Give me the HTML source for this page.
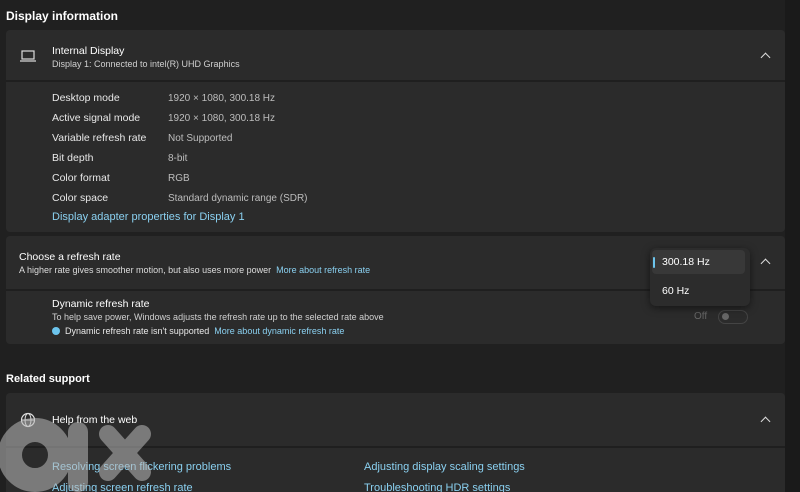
<!DOCTYPE html><html><head><style>
html,body{margin:0;width:800px;height:492px;overflow:hidden}
body{background:#202020;font-family:"Liberation Sans",sans-serif;color:#fff;position:relative}
.a{position:absolute;white-space:nowrap}
.card{position:absolute;left:6px;width:779px;background:#2b2b2b;border-radius:4px}
.sep{position:absolute;left:6px;width:779px;height:2px;background:#1f1f1f}
.h{font-size:12px;font-weight:bold}
.t{font-size:10.5px}
.s{font-size:9px;color:#d0d0d0}
.l{color:#8ad0f0}
.k{font-size:10.5px;color:#e8e8e8}
.v{font-size:10.5px;color:#bdbdbd}
.chev{position:absolute;width:6px;height:6px;border-left:1.5px solid #ddd;border-top:1.5px solid #ddd;transform:rotate(45deg)}
</style></head><body>
<div class="a" style="left:785px;top:0;width:15px;height:492px;background:#1a1a1a"></div>
<div class="a h" style="left:6px;top:9px">Display information</div>
<div class="card" style="top:30px;height:202px"></div>
<div class="sep" style="top:80px"></div>
<svg class="a" style="left:20px;top:50px" width="16" height="13"><rect x="2" y="1" width="12" height="8" fill="none" stroke="#ddd" stroke-width="1.2"/><line x1="0" y1="11" x2="16" y2="11" stroke="#ddd" stroke-width="1.2"/></svg>
<div class="a t" style="left:52px;top:45px">Internal Display</div>
<div class="a s" style="left:52px;top:59px">Display 1: Connected to intel(R) UHD Graphics</div>
<div class="chev" style="left:762px;top:54px"></div>
<div class="a k" style="left:52px;top:88px;line-height:20px">Desktop mode<br>Active signal mode<br>Variable refresh rate<br>Bit depth<br>Color format<br>Color space</div>
<div class="a v" style="left:168px;top:88px;line-height:20px;font-size:10px;padding-top:1px">1920 × 1080, 300.18 Hz<br>1920 × 1080, 300.18 Hz<br>Not Supported<br>8-bit<br>RGB<br>Standard dynamic range (SDR)</div>
<div class="a l" style="left:52px;top:211px;font-size:11px">Display adapter properties for Display 1</div>
<div class="card" style="top:236px;height:108px"></div>
<div class="sep" style="top:289px"></div>
<div class="a t" style="left:19px;top:251px">Choose a refresh rate</div>
<div class="a s" style="left:19px;top:265px;color:#ddd">A higher rate gives smoother motion, but also uses more power &nbsp;<span class="l">More about refresh rate</span></div>
<div class="a t" style="left:52px;top:298px">Dynamic refresh rate</div>
<div class="a s" style="left:52px;top:312px">To help save power, Windows adjusts the refresh rate up to the selected rate above</div>
<div class="a" style="left:52px;top:327px;width:8px;height:8px;border-radius:50%;background:#6cc4ec"></div>
<div class="a s" style="left:65px;top:326px;color:#e8e8e8">Dynamic refresh rate isn't supported &nbsp;<span class="l">More about dynamic refresh rate</span></div>
<div class="a v" style="left:694px;top:311px;color:#666;font-size:10px">Off</div>
<div class="a" style="left:718px;top:310px;width:28px;height:12px;border:1px solid #444;border-radius:7px"></div>
<div class="a" style="left:722px;top:313px;width:7px;height:7px;border-radius:50%;background:#666"></div>
<div class="a" style="left:650px;top:248px;width:100px;height:58px;background:#2c2c2c;border-radius:6px;box-shadow:0 2px 8px rgba(0,0,0,.5)"></div>
<div class="a" style="left:652px;top:250px;width:93px;height:24px;background:#383838;border-radius:4px"></div>
<div class="a" style="left:653px;top:257px;width:2px;height:11px;background:#6cc4ec;border-radius:1px"></div>
<div class="a t" style="left:662px;top:256px">300.18 Hz</div>
<div class="a t" style="left:662px;top:285px">60 Hz</div>
<div class="chev" style="left:762px;top:260px"></div>
<div class="a h" style="left:6px;top:373px;font-size:11px">Related support</div>
<div class="card" style="top:393px;height:110px"></div>
<div class="sep" style="top:446px"></div>
<svg class="a" style="left:20px;top:412px" width="16" height="16"><circle cx="8" cy="8" r="6.5" fill="none" stroke="#ddd" stroke-width="1.2"/><ellipse cx="8" cy="8" rx="3" ry="6.5" fill="none" stroke="#ddd" stroke-width="1"/><line x1="1.5" y1="8" x2="14.5" y2="8" stroke="#ddd"/></svg>
<div class="a t" style="left:52px;top:414px">Help from the web</div>
<div class="chev" style="left:762px;top:418px"></div>
<div class="a l" style="left:52px;top:457px;font-size:11px;line-height:21px">Resolving screen flickering problems<br>Adjusting screen refresh rate</div>
<div class="a l" style="left:364px;top:457px;font-size:11px;line-height:21px">Adjusting display scaling settings<br>Troubleshooting HDR settings</div>
<svg class="a" style="left:0;top:418px" width="155" height="74" opacity="0.55"><circle cx="35" cy="37" r="25" fill="none" stroke="#bbb" stroke-width="24"/><rect x="68" y="4" width="20" height="70" rx="10" fill="#bbb"/><path d="M108 16 L142 54 M142 16 L108 54" stroke="#bbb" stroke-width="18" stroke-linecap="round"/></svg>
</body></html>
